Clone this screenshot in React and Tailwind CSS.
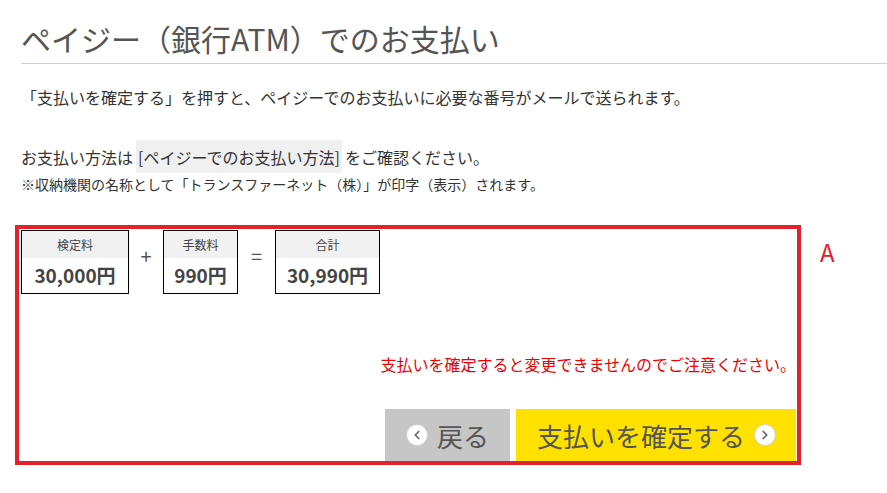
import { ChevronLeft, ChevronRight } from 'lucide-react';

const font = { fontFamily: '"Noto Sans CJK JP", "Noto Sans", sans-serif' };

const AmountBox = ({ label, value, width }) => (
  <div className={`flex flex-col border border-black ${width}`}>
    <div className="h-[27px] bg-[#f1f1f1] flex items-center justify-center text-[12px] text-[#444]">
      {label}
    </div>
    <div className="h-[35px] bg-white flex items-center justify-center text-[19px] font-bold text-[#444]">
      {value}
    </div>
  </div>
);

const CircleIcon = ({ dir }) => (
  <span className="w-[22px] h-[22px] rounded-full bg-white border border-[#d0d0d0] flex items-center justify-center text-[#666] shrink-0">
    {dir === 'left' ? <ChevronLeft size={14} strokeWidth={3} /> : <ChevronRight size={14} strokeWidth={3} />}
  </span>
);

export default function App() {
  return (
    <div className="w-[887px] h-[493px] bg-white overflow-hidden" style={font}>
      {/* Heading */}
      <h1 className="ml-[21px] mt-[18px] h-[46px] pb-[5px] leading-[40px] text-[30px] text-[#555] font-normal border-b border-[#cfcfcf]">
        ペイジー（銀行ATM）でのお支払い
      </h1>

      {/* Description */}
      <p className="ml-[21px] mt-[21px] h-[24px] flex items-center text-[16px] text-[#333]">
        「支払いを確定する」を押すと、ペイジーでのお支払いに必要な番号がメールで送られます。
      </p>
      <p className="ml-[21px] mt-[31px] h-[33px] flex items-center text-[16px] text-[#333]">
        お支払い方法は
        <span className="h-[33px] flex items-center bg-[#f0f0f0] px-[2px] mx-[3px]">[ペイジーでのお支払い方法]</span>
        をご確認ください。
      </p>
      <p className="ml-[21px] mt-[1px] h-[20px] flex items-center text-[14px] text-[#333]">
        ※収納機関の名称として「トランスファーネット（株）」が印字（表示）されます。
      </p>

      {/* Payment area */}
      <div className="flex items-start mt-[31px]">
        <div className="ml-[15px] w-[786px] h-[240px] border-4 border-[#e3212b] flex flex-col pt-[1px] pl-[2px] pr-[1px]">
          <div className="flex items-start">
            <AmountBox label="検定料" value="30,000円" width="w-[108px]" />
            <span className="w-[34px] mt-[14px] text-center text-[20px] text-[#555] leading-[24px]">+</span>
            <AmountBox label="手数料" value="990円" width="w-[75px]" />
            <span className="w-[37px] mt-[14px] text-center text-[20px] text-[#555] leading-[24px]">=</span>
            <AmountBox label="合計" value="30,990円" width="w-[105px]" />
          </div>

          <p className="mt-[58px] h-[24px] flex items-center justify-end text-[16px] text-[#e00]">
            支払いを確定すると変更できませんのでご注意ください。
          </p>

          <div className="mt-auto flex justify-end gap-[6px]">
            <button className="w-[125px] h-[52px] bg-[#c6c6c6] flex items-center gap-[9px] pl-[21px] text-[26px] text-[#555]">
              <CircleIcon dir="left" />
              戻る
            </button>
            <button className="w-[280px] h-[52px] bg-[#ffe100] flex items-center justify-between pl-[21px] pr-[20px] text-[26px] text-[#555]">
              支払いを確定する
              <CircleIcon dir="right" />
            </button>
          </div>
        </div>
        <span className="ml-[19px] mt-[12px] text-[24px] leading-[30px] text-[#e3212b]">A</span>
      </div>
    </div>
  );
}
